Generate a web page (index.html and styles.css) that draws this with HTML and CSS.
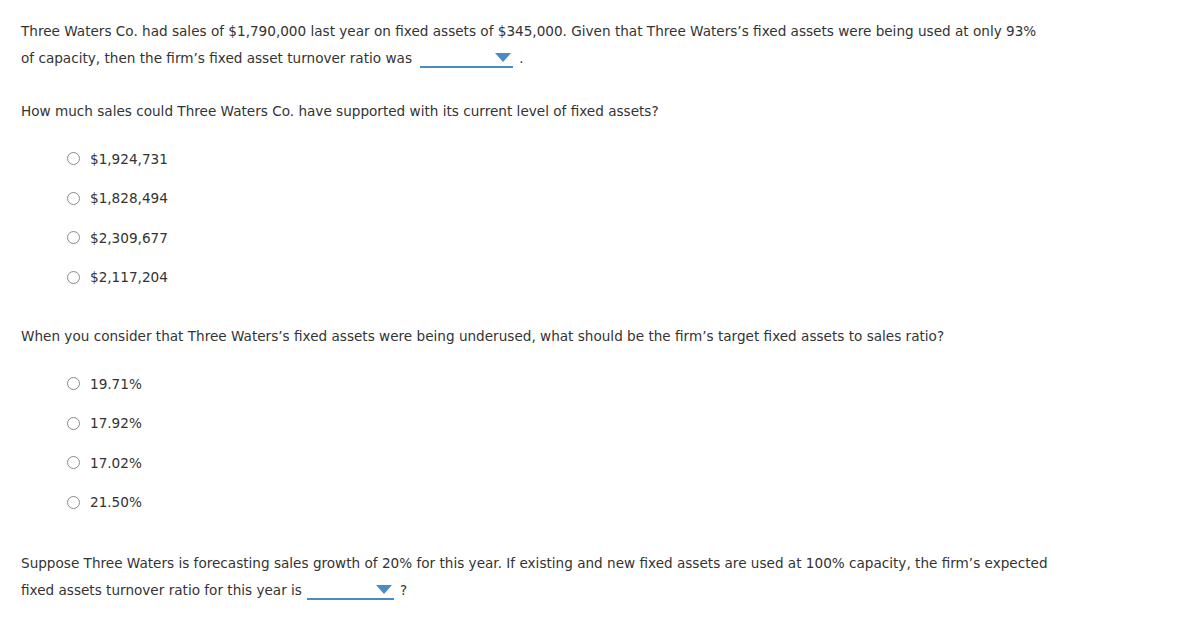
FILE: index.html
```html
<!DOCTYPE html>
<html>
<head>
<meta charset="utf-8">
<link rel="stylesheet" href="styles.css">
</head>
<body>
<div class="page">
  <p class="para">Three Waters Co. had sales of $1,790,000 last year on fixed assets of $345,000. Given that Three Waters’s fixed assets were being used at only 93% of capacity, then the firm’s fixed asset turnover ratio was <span class="dd dd-1"><span class="caret"></span></span><span class="after after-1">.</span></p>

  <p class="para q">How much sales could Three Waters Co. have supported with its current level of fixed assets?</p>
  <ul class="opts">
    <li class="opt"><span class="radio"></span><span>$1,924,731</span></li>
    <li class="opt"><span class="radio"></span><span>$1,828,494</span></li>
    <li class="opt"><span class="radio"></span><span>$2,309,677</span></li>
    <li class="opt"><span class="radio"></span><span>$2,117,204</span></li>
  </ul>

  <p class="para q">When you consider that Three Waters’s fixed assets were being underused, what should be the firm’s target fixed assets to sales ratio?</p>
  <ul class="opts">
    <li class="opt"><span class="radio"></span><span>19.71%</span></li>
    <li class="opt"><span class="radio"></span><span>17.92%</span></li>
    <li class="opt"><span class="radio"></span><span>17.02%</span></li>
    <li class="opt"><span class="radio"></span><span>21.50%</span></li>
  </ul>

  <p class="para q q-last">Suppose Three Waters is forecasting sales growth of 20% for this year. If existing and new fixed assets are used at 100% capacity, the firm’s expected fixed assets turnover ratio for this year is<span class="dd dd-2"><span class="caret"></span></span><span class="after after-2">?</span></p>
</div>
</body>
</html>
```
FILE: styles.css
```css
html, body {
  margin: 0;
  padding: 0;
  background: #fff;
}
.page {
  padding: 18px 21px 0 21px;
  width: 1030px;
  font-family: "DejaVu Sans", Verdana, sans-serif;
  font-size: 13.6px;
  color: #333;
}
.para {
  margin: 0;
  line-height: 27px;
}
.q {
  margin-top: 26px;
}
.q-last {
  margin-top: 28px;
}
.opts {
  list-style: none;
  margin: 14px 0 0 0;
  padding: 0 0 0 46px;
}
.opt {
  height: 39.5px;
  display: flex;
  align-items: center;
}
.radio {
  width: 11px;
  height: 11px;
  border: 1px solid #8a8a8a;
  border-radius: 50%;
  margin-right: 10px;
  flex: none;
}
.dd {
  display: inline-block;
  position: relative;
  height: 16px;
  vertical-align: -5px;
  border-bottom: 2px solid #4a8bc6;
}
.dd-1 { width: 93px; margin-left: 4px; }
.dd-2 { width: 87px; margin-left: 5px; }
.caret {
  position: absolute;
  right: 2px;
  top: 3px;
  width: 0;
  height: 0;
  border-left: 8px solid transparent;
  border-right: 8px solid transparent;
  border-top: 9px solid #4a8bc6;
}
.after-1 { margin-left: 6px; }
.after-2 { margin-left: 6px; }
```
